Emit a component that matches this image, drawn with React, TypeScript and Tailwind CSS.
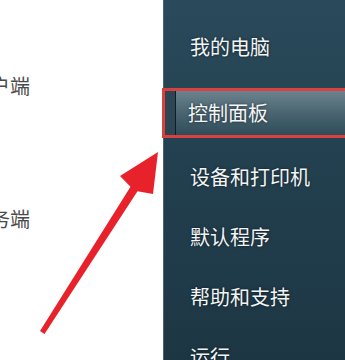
import React from 'react';

const items = ['我的电脑', '控制面板', '设备和打印机', '默认程序', '帮助和支持', '运行'];

const font = { fontFamily: '"Noto Sans CJK SC", "Noto Sans", sans-serif' };

const Item = ({ label }: { label: string }) => (
  <div className="flex h-[60px] shrink-0 items-center pl-[26px] text-[20px] text-[#f2f4f5] [text-shadow:0_0_3px_rgba(0,0,0,0.6)]">
    {label}
  </div>
);

export default function App() {
  return (
    <div className="relative flex h-[360px] w-[345px] overflow-hidden bg-white" style={font}>
      <div className="flex w-[163px] shrink-0 flex-col text-[20px] leading-[28px] text-[#4a4a4a]">
        <div className="-ml-[10px] mt-[72px] whitespace-nowrap">户端</div>
        <div className="-ml-[10px] mt-[105px] whitespace-nowrap">务端</div>
      </div>

      <div className="flex flex-1 flex-col border-l border-[#4d6572] bg-gradient-to-b from-[#2a4a5b] via-[#223f4e] to-[#1d3644] pt-[17px]">
        <Item label={items[0]} />
        <div className="-mr-[10px] ml-[-2px] mt-[11px] flex h-[50px] shrink-0 border-[3px] border-[#d9413e]">
          <div className="w-[10px] bg-[#2c4653]" />
          <div className="w-px bg-[#0f1e26]" />
          <div className="flex flex-1 items-center bg-gradient-to-b from-[#6b838e] via-[#4a6571] to-[#2f4c5a] pl-[12px] text-[20px] text-[#f4f6f7] [text-shadow:0_0_3px_rgba(0,0,0,0.6)]">
            {items[1]}
          </div>
        </div>
        <div className="mt-[9px] flex shrink-0 flex-col">
          {items.slice(2).map((label) => (
            <Item key={label} label={label} />
          ))}
        </div>
      </div>

      <svg className="absolute left-0 top-0" width="345" height="360" viewBox="0 0 345 360">
        <polygon
          points="40,331 130.5,186.8 120,176 158,152 153,194 137.5,191.2 44.5,334"
          fill="#e8222b"
          strokeLinejoin="round"
        />
      </svg>
    </div>
  );
}
